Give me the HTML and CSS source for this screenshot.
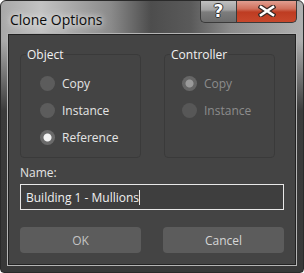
FILE: index.html
```html
<!DOCTYPE html>
<html lang="en">
<head>
    <meta charset="UTF-8">
    <title>Clone Options</title>
    <link rel="stylesheet" href="styles.css">
</head>
<body>
    <div class="window">
        <div class="titlebar">
            <span class="title">Clone Options</span>
            <div class="caption-buttons">
                <button class="cap-btn help-btn" type="button">?</button>
                <button class="cap-btn close-btn" type="button">
                    <svg width="18" height="12" viewBox="0 0 18 12">
                        <path d="M3 2 L15 10 M15 2 L3 10" stroke="#3a2a26" stroke-width="5" stroke-linecap="square"/>
                        <path d="M3 2 L15 10 M15 2 L3 10" stroke="#fff" stroke-width="2.6" stroke-linecap="square"/>
                    </svg>
                </button>
            </div>
        </div>
        <div class="client">
            <div class="groups">
                <fieldset class="group group-object">
                    <legend>Object</legend>
                    <label class="radio-row"><input type="radio" name="obj"> Copy</label>
                    <label class="radio-row"><input type="radio" name="obj"> Instance</label>
                    <label class="radio-row"><input type="radio" name="obj" checked> Reference</label>
                </fieldset>
                <fieldset class="group group-controller" disabled>
                    <legend>Controller</legend>
                    <label class="radio-row"><input type="radio" name="ctl" checked> Copy</label>
                    <label class="radio-row"><input type="radio" name="ctl"> Instance</label>
                </fieldset>
            </div>
            <label class="name-label" for="name">Name:</label>
            <div class="name-field">
                <span id="name" class="name-input">Building 1 - Mullions</span><span class="caret"></span>
            </div>
            <div class="actions">
                <button class="btn btn-ok" type="button">OK</button>
                <button class="btn btn-cancel" type="button">Cancel</button>
            </div>
        </div>
    </div>
</body>
</html>
```

FILE: styles.css
```css
body {
    margin: 0;
    background-color: #fff;
    font-family: "Open Sans", "Noto Sans", sans-serif;
}
.window {
    width: 304px;
    height: 273px;
    box-sizing: border-box;
    border: 1px solid #2a2a2a;
    border-radius: 6px 6px 4px 4px;
    padding: 0 7px 7px 7px;
    background:
        linear-gradient(to bottom, rgba(0, 0, 0, 0) 0, rgba(0, 0, 0, 0) 40px, #3b3b3b 110px, #383838 100%),
        linear-gradient(to right, #a8a8a8 0, #c2c2c2 40px, #8a8a8a 110px, #4d4d4d 150px, #5a5a5a 190px, #8c8c8c 230px, #b0b0b0 100%);
    overflow: hidden;
}
.titlebar {
    height: 33px;
    display: flex;
    justify-content: space-between;
    align-items: flex-start;
}
.title {
    margin: 9px 0 0 2px;
    font-size: 14px;
    color: #0c0c0c;
    text-shadow: 0 0 10px #ececec, 0 0 5px #e6e6e6;
}
.caption-buttons {
    display: flex;
    margin-top: -1px;
    margin-right: -1px;
}
.cap-btn {
    height: 23px;
    border: 1px solid #3a3a3a;
    border-top: none;
    padding: 0;
    display: flex;
    align-items: center;
    justify-content: center;
    cursor: pointer;
}
.help-btn {
    width: 36px;
    border-radius: 0 0 0 5px;
    border-right: none;
    background: linear-gradient(to bottom, #c4c4c4 0, #a2a2a2 45%, #7c7c7c 55%, #6d6d6d 100%);
    font-family: "DejaVu Sans", sans-serif;
    font-weight: bold;
    font-size: 17px;
    color: #fff;
    text-shadow: -1px 0 #333, 1px 0 #333, 0 -1px #333, 0 1px #333;
}
.close-btn {
    width: 61px;
    border-radius: 0 0 5px 0;
    background: linear-gradient(to bottom, #e3a497 0, #d0705c 40%, #be3c22 55%, #c8482c 100%);
}
.client {
    height: 231px;
    box-sizing: border-box;
    background-color: #444;
    border: 1px solid #222;
    box-shadow: 0 0 0 1px #b4b4b4;
    padding: 0 11px;
    color: #e4e4e4;
    font-size: 12px;
}
.groups {
    display: grid;
    grid-template-columns: 121px 111px;
    column-gap: 23px;
    margin-top: 12px;
}
.group {
    margin: 0;
    padding: 8px 0 0 0;
    min-width: 0;
    height: 111px;
    box-sizing: border-box;
    border: 1px solid #3a3a3a;
    border-radius: 4px;
    display: flex;
    flex-direction: column;
}
.group legend {
    padding: 0 1px;
    margin-left: 5px;
    color: #f2f2f2;
    font-size: 12px;
    line-height: 15px;
}
.group-object .radio-row {
    margin-left: 19px;
}
.group-controller .radio-row {
    margin-left: 17px;
    color: #8c8c8c;
}
.radio-row {
    display: flex;
    align-items: center;
    gap: 7px;
    height: 27px;
}
.radio-row input {
    appearance: none;
    margin: 0;
    width: 15px;
    height: 15px;
    border-radius: 50%;
    background-color: #5c5c5c;
}
.radio-row input:checked {
    background: radial-gradient(circle, #f4f4f4 0, #f4f4f4 3.5px, #6a6a6a 4.5px);
}
.group-controller input {
    background-color: #575757;
}
.group-controller input:checked {
    background: radial-gradient(circle, #9a9a9a 0, #9a9a9a 3.5px, #666 4.5px);
}
.name-label {
    display: block;
    margin-top: 7px;
    line-height: 16px;
}
.name-field {
    margin-top: 3px;
    height: 26px;
    box-sizing: border-box;
    border: 1px solid #e8e8e8;
    background-color: #3e3e3e;
    display: flex;
    align-items: center;
    padding-left: 5px;
    color: #f0f0f0;
}
.caret {
    width: 1px;
    height: 15px;
    background-color: #e8e8e8;
}
.actions {
    display: flex;
    justify-content: space-between;
    margin-top: 17px;
}
.btn {
    width: 121px;
    height: 26px;
    border: none;
    border-radius: 4px;
    background-color: #5c5c5c;
    color: #c4c4c4;
    font-family: "Open Sans", "Noto Sans", sans-serif;
    font-size: 12px;
    padding: 0;
}
.btn-cancel {
    width: 121px;
    color: #d6d6d6;
}
```
